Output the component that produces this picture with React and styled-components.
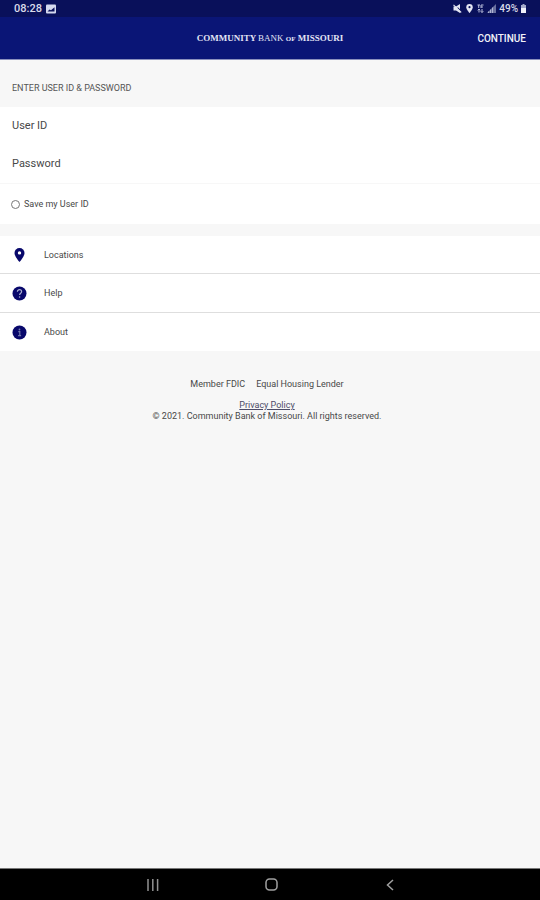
import React from "react";
import styled, { createGlobalStyle } from "styled-components";

const GlobalStyle = createGlobalStyle`
  *, *::before, *::after { box-sizing: border-box; }
  body {
    margin: 0;
    background: #f7f7f7;
    color: #484848;
    font-family: Roboto, "Liberation Sans", sans-serif;
    font-size: 9px;
    line-height: 12px;
  }
`;

const Screen = styled.div`
  min-height: 100vh;
  display: flex;
  flex-direction: column;
`;

const StatusBar = styled.div`
  height: 17px;
  padding: 0 14px;
  display: flex;
  align-items: center;
  justify-content: space-between;
  background: #09105a;
  color: #d9dbe9;
  font-weight: 500;
`;

const StatusGroup = styled.div`
  display: flex;
  align-items: center;
  gap: ${(p) => p.$gap}px;
  font-size: ${(p) => p.$size}px;
`;

const Header = styled.header`
  height: 43px;
  padding: 1px 14px 0;
  display: grid;
  grid-template-columns: 1fr auto 1fr;
  align-items: center;
  background: #0a1576;
  border-bottom: 1px solid #8b90bd;
  color: #ffffff;
`;

const BankName = styled.h1`
  grid-column: 2;
  margin: 0;
  color: #e3e5f5;
  font-family: "Liberation Serif", serif;
  font-size: 9px;
  font-weight: 700;
  white-space: nowrap;
`;

const LightWord = styled.span`
  font-weight: 400;
`;

const SmallWord = styled.span`
  font-size: 7px;
`;

const ContinueButton = styled.button`
  justify-self: end;
  padding: 0;
  border: 0;
  background: none;
  color: #f2f2f8;
  font: 500 10px/12px Roboto, sans-serif;
  cursor: pointer;
`;

const SectionTitle = styled.h2`
  margin: 0;
  padding: 22px 12px 13px;
  font-size: 9px;
  font-weight: 400;
  color: #555555;
`;

const LoginForm = styled.form`
  background: #ffffff;
`;

const Field = styled.div`
  height: 38px;
  padding: 0 12px;
  display: flex;
  align-items: center;
  gap: 12px;
`;

const FieldLabel = styled.label`
  font-size: 11px;
`;

const TextInput = styled.input`
  flex: 1;
  min-width: 0;
  height: 24px;
  padding: 0;
  border: 0;
  outline: 0;
  background: transparent;
  font: inherit;
  color: inherit;
`;

const SaveRow = styled.div`
  height: 41px;
  padding: 0 11px;
  display: flex;
  align-items: center;
  gap: 4px;
  border-top: 1px solid #f7f7f7;
`;

const RoundCheck = styled.input`
  appearance: none;
  width: 9px;
  height: 9px;
  margin: 0;
  border: 1px solid #777777;
  border-radius: 50%;
  &:checked { background: #0a1576; }
`;

const Menu = styled.nav`
  margin-top: 12px;
  background: #ffffff;
`;

const MenuLink = styled.a`
  height: 39px;
  padding: 0 12px;
  display: grid;
  grid-template-columns: 15px 1fr;
  column-gap: 17px;
  align-items: center;
  color: inherit;
  text-decoration: none;
  border-bottom: 1px solid #dedede;
  &:first-child { height: 38px; }
  &:last-child { height: 38px; border-bottom: 0; }
`;

const Footer = styled.footer`
  padding: 28px 18px 28px 12px;
  display: flex;
  flex-direction: column;
  align-items: center;
  line-height: 11px;
`;

const Memberships = styled.div`
  display: flex;
  gap: 11px;
  margin-bottom: 10px;
`;

const PolicyLink = styled.a`
  color: #4c4c68;
`;

const SystemNav = styled.div`
  height: 32px;
  margin-top: auto;
  padding: 0 17%;
  display: grid;
  grid-template-columns: repeat(3, 1fr);
  background: #000000;
  border-top: 1px solid #777777;
`;

const SystemButton = styled.button`
  padding: 0 0 0 3px;
  border: 0;
  background: none;
  display: flex;
  align-items: center;
  justify-content: center;
`;

const Icon = styled.svg`
  display: block;
  flex: none;
`;

const PictureIcon = () => (
  <Icon width="10" height="10" viewBox="0 0 10 10">
    <rect width="10" height="9" y=".5" rx="1" fill="#d5d9ef" />
    <path d="M1.500 7.500 3.500 5.500 5 6.300 8.500 3.300v4.200z" fill="#09105a" />
  </Icon>
);

const MuteIcon = () => (
  <Icon width="9" height="9" viewBox="0 0 9 9">
    <path d="M.5 2.500h2.500L7 0v9L3 6.500H.5z" fill="#e4e6f3" />
    <path d="M4.500 3.700 9 8.200" stroke="#09105a" strokeWidth="1.200" />
    <path d="M.5.8 8.200 8.500" stroke="#e4e6f3" strokeWidth="1.100" />
  </Icon>
);

const Pin = ({ width, height, fill, hole }) => (
  <Icon width={width} height={height} viewBox="0 0 10 14">
    <path d="M5 0a5 5 0 0 0-5 5c0 3.600 5 9 5 9s5-5.400 5-9a5 5 0 0 0-5-5z" fill={fill} />
    <circle cx="5" cy="4.900" r="1.700" fill={hole} />
  </Icon>
);

const DataIcon = () => (
  <Icon width="7" height="9" viewBox="0 0 7 9" fill="none" stroke="#b9bddb">
    <path d="M.5 1h2.500M1.700 1v3M4 1h2.500M4 3h2M4 1v3M2 8.500V5M.7 6.300 2 5l1.300 1.300M5 5v3.500M3.700 7.200 5 8.500l1.300-1.300" />
  </Icon>
);

const SignalIcon = () => (
  <Icon width="9" height="9" viewBox="0 0 9 9">
    <path d="M0 9 9 0v9z" fill="#69709f" />
    <path d="M1.500 9V7.500M3.500 9V5.500M5.500 9V3.500" stroke="#aeb3d2" />
  </Icon>
);

const BatteryIcon = () => (
  <Icon width="5" height="9" viewBox="0 0 5 9">
    <path d="M1.500 0h2v1H5v8H0V1h1.500z" fill="#a4a9ca" />
    <path d="M0 4h5v5H0z" fill="#f0f1fa" />
  </Icon>
);

const HelpIcon = () => (
  <Icon width="15" height="15" viewBox="0 0 15 15">
    <circle cx="7.500" cy="7.500" r="7" fill="#08086b" />
    <path d="M5.400 5.700c0-2.700 4.200-2.600 4.200 0 0 1.500-2 1.600-2 3.200" fill="none" stroke="#a9adcf" strokeWidth="1.200" />
    <circle cx="7.600" cy="11" r=".8" fill="#a9adcf" />
  </Icon>
);

const AboutIcon = () => (
  <Icon width="15" height="15" viewBox="0 0 15 15">
    <circle cx="7.500" cy="7.500" r="7" fill="#08086b" />
    <circle cx="7.500" cy="4.500" r=".9" fill="#7278ad" />
    <path d="M6.300 6.700h1.500v4M6.100 10.700h3" fill="none" stroke="#7278ad" strokeWidth="1.200" />
  </Icon>
);

const RecentsIcon = () => (
  <Icon width="12" height="12" viewBox="0 0 12 12" stroke="#919191" strokeWidth="1.500">
    <path d="M1 0v12M5.800 0v12M10.600 0v12" />
  </Icon>
);

const HomeIcon = () => (
  <Icon width="13" height="13" viewBox="0 0 13 13" fill="none" stroke="#a0a0a0" strokeWidth="1.500">
    <rect x="1" y="1" width="11" height="11" rx="3.500" />
  </Icon>
);

const BackIcon = () => (
  <Icon width="8" height="12" viewBox="0 0 8 12" fill="none" stroke="#a0a0a0" strokeWidth="1.500">
    <path d="M7 1 1.500 6 7 11" />
  </Icon>
);

const menuItems = [
  { label: "Locations", icon: <Pin width={15} height={14} fill="#08086b" hole="#ffffff" /> },
  { label: "Help", icon: <HelpIcon /> },
  { label: "About", icon: <AboutIcon /> },
];

export default function App() {
  return (
    <>
      <GlobalStyle />
      <Screen>
        <StatusBar>
          <StatusGroup $gap={4} $size={11}>
            <span>08:28</span>
            <PictureIcon />
          </StatusGroup>
          <StatusGroup $gap={3} $size={10}>
            <MuteIcon />
            <Pin width={9} height={9} fill="#e4e6f3" hole="#09105a" />
            <DataIcon />
            <SignalIcon />
            <span>49%</span>
            <BatteryIcon />
          </StatusGroup>
        </StatusBar>
        <Header>
          <BankName>
            COMMUNITY <LightWord>BANK</LightWord> <SmallWord>OF</SmallWord> MISSOURI
          </BankName>
          <ContinueButton type="submit" form="login">CONTINUE</ContinueButton>
        </Header>
        <main>
          <SectionTitle>ENTER USER ID &amp; PASSWORD</SectionTitle>
          <LoginForm id="login" onSubmit={(e) => e.preventDefault()}>
            <Field>
              <FieldLabel htmlFor="user-id">User ID</FieldLabel>
              <TextInput id="user-id" type="text" autoComplete="username" />
            </Field>
            <Field>
              <FieldLabel htmlFor="password">Password</FieldLabel>
              <TextInput id="password" type="password" autoComplete="current-password" />
            </Field>
            <SaveRow>
              <RoundCheck id="save-id" type="checkbox" />
              <label htmlFor="save-id">Save my User ID</label>
            </SaveRow>
          </LoginForm>
          <Menu>
            {menuItems.map(({ label, icon }) => (
              <MenuLink key={label} href={`#${label.toLowerCase()}`}>
                {icon}
                <span>{label}</span>
              </MenuLink>
            ))}
          </Menu>
        </main>
        <Footer>
          <Memberships>
            <span>Member FDIC</span>
            <span>Equal Housing Lender</span>
          </Memberships>
          <PolicyLink href="#privacy">Privacy Policy</PolicyLink>
          <span>© 2021. Community Bank of Missouri. All rights reserved.</span>
        </Footer>
        <SystemNav>
          <SystemButton type="button" aria-label="Recent apps"><RecentsIcon /></SystemButton>
          <SystemButton type="button" aria-label="Home"><HomeIcon /></SystemButton>
          <SystemButton type="button" aria-label="Back"><BackIcon /></SystemButton>
        </SystemNav>
      </Screen>
    </>
  );
}
